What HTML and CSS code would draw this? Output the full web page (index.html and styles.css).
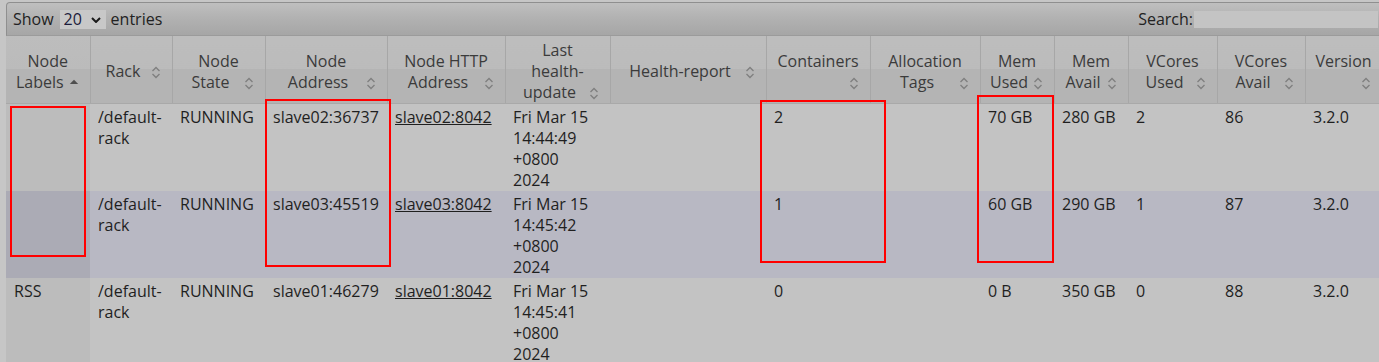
FILE: index.html
```html
<!DOCTYPE html>
<html lang="en">
<head>
<meta charset="utf-8">
<title>Nodes of the cluster</title>
<link rel="stylesheet" href="styles.css">
</head>
<body>
<div class="page">
  <div class="wrapper">
    <div class="toolbar">
      <label class="length">Show <span class="select-wrap"><select class="len-select"><option>20</option></select><svg class="chev" viewBox="0 0 10 6" width="10" height="6"><path d="M1 1 5 5 9 1"/></svg></span> entries</label>
      <label class="search">Search:<input class="search-input" type="text"></label>
    </div>
    <table class="grid">
      <colgroup>
        <col class="w84"><col class="w82"><col class="w93"><col class="w122"><col class="w118"><col class="w105"><col class="w156"><col class="w104"><col class="w110"><col class="w74"><col class="w74"><col class="w89"><col class="w88"><col class="w77">
      </colgroup>
      <thead>
        <tr>
          <th>Node<br>Labels<span class="si"><svg viewBox="0 0 16 21" width="16" height="21"><path class="asc" d="M3.8 12 8 7.8 12.2 12Z"/></svg></span></th>
          <th>Rack<span class="si"><svg viewBox="0 0 16 21" width="16" height="21"><path class="both" d="M4.5 10 8 6.5 11.5 10M4.5 13 8 16.5 11.5 13"/></svg></span></th>
          <th>Node<br>State<span class="si"><svg viewBox="0 0 16 21" width="16" height="21"><path class="both" d="M4.5 10 8 6.5 11.5 10M4.5 13 8 16.5 11.5 13"/></svg></span></th>
          <th>Node<br>Address<span class="si"><svg viewBox="0 0 16 21" width="16" height="21"><path class="both" d="M4.5 10 8 6.5 11.5 10M4.5 13 8 16.5 11.5 13"/></svg></span></th>
          <th>Node HTTP<br>Address<span class="si"><svg viewBox="0 0 16 21" width="16" height="21"><path class="both" d="M4.5 10 8 6.5 11.5 10M4.5 13 8 16.5 11.5 13"/></svg></span></th>
          <th>Last<br>health-<br>update<span class="si"><svg viewBox="0 0 16 21" width="16" height="21"><path class="both" d="M4.5 10 8 6.5 11.5 10M4.5 13 8 16.5 11.5 13"/></svg></span></th>
          <th>Health-report<span class="si"><svg viewBox="0 0 16 21" width="16" height="21"><path class="both" d="M4.5 10 8 6.5 11.5 10M4.5 13 8 16.5 11.5 13"/></svg></span></th>
          <th>Containers<span class="si"><svg viewBox="0 0 16 21" width="16" height="21"><path class="both" d="M4.5 10 8 6.5 11.5 10M4.5 13 8 16.5 11.5 13"/></svg></span></th>
          <th>Allocation<br>Tags<span class="si"><svg viewBox="0 0 16 21" width="16" height="21"><path class="both" d="M4.5 10 8 6.5 11.5 10M4.5 13 8 16.5 11.5 13"/></svg></span></th>
          <th>Mem<br>Used<span class="si"><svg viewBox="0 0 16 21" width="16" height="21"><path class="both" d="M4.5 10 8 6.5 11.5 10M4.5 13 8 16.5 11.5 13"/></svg></span></th>
          <th>Mem<br>Avail<span class="si"><svg viewBox="0 0 16 21" width="16" height="21"><path class="both" d="M4.5 10 8 6.5 11.5 10M4.5 13 8 16.5 11.5 13"/></svg></span></th>
          <th>VCores<br>Used<span class="si"><svg viewBox="0 0 16 21" width="16" height="21"><path class="both" d="M4.5 10 8 6.5 11.5 10M4.5 13 8 16.5 11.5 13"/></svg></span></th>
          <th>VCores<br>Avail<span class="si"><svg viewBox="0 0 16 21" width="16" height="21"><path class="both" d="M4.5 10 8 6.5 11.5 10M4.5 13 8 16.5 11.5 13"/></svg></span></th>
          <th>Version<span class="si"><svg viewBox="0 0 16 21" width="16" height="21"><path class="both" d="M4.5 10 8 6.5 11.5 10M4.5 13 8 16.5 11.5 13"/></svg></span></th>
        </tr>
      </thead>
      <tbody>
        <tr class="odd">
          <td class="sorted"></td>
          <td>/default-rack</td>
          <td>RUNNING</td>
          <td>slave02:36737</td>
          <td><a href="#">slave02:8042</a></td>
          <td class="date">Fri Mar 15 14:44:49 +0800 2024</td>
          <td></td>
          <td>2</td>
          <td></td>
          <td>70 GB</td>
          <td>280 GB</td>
          <td>2</td>
          <td>86</td>
          <td>3.2.0</td>
        </tr>
        <tr class="even">
          <td class="sorted"></td>
          <td>/default-rack</td>
          <td>RUNNING</td>
          <td>slave03:45519</td>
          <td><a href="#">slave03:8042</a></td>
          <td class="date">Fri Mar 15 14:45:42 +0800 2024</td>
          <td></td>
          <td>1</td>
          <td></td>
          <td>60 GB</td>
          <td>290 GB</td>
          <td>1</td>
          <td>87</td>
          <td>3.2.0</td>
        </tr>
        <tr class="odd">
          <td class="sorted">RSS</td>
          <td>/default-rack</td>
          <td>RUNNING</td>
          <td>slave01:46279</td>
          <td><a href="#">slave01:8042</a></td>
          <td class="date">Fri Mar 15 14:45:41 +0800 2024</td>
          <td></td>
          <td>0</td>
          <td></td>
          <td>0 B</td>
          <td>350 GB</td>
          <td>0</td>
          <td>88</td>
          <td>3.2.0</td>
        </tr>
      </tbody>
    </table>
  </div>
  <div class="mark m1"></div>
  <div class="mark m2"></div>
  <div class="mark m3"></div>
  <div class="mark m4"></div>
</div>
</body>
</html>
```

FILE: styles.css
```css
html {
  overflow: hidden;
}

body {
  margin: 0;
  background: #c6c6c6;
  font-family: "Open Sans", "Noto Sans", "Liberation Sans", sans-serif;
  font-size: 16px;
  color: #1f1f1f;
}

.page {
  position: relative;
  padding: 2px 0 0 6px;
}

.wrapper {
  width: 1376px;
}

.toolbar {
  display: flex;
  align-items: center;
  justify-content: space-between;
  height: 32px;
  padding: 0 3px 0 6px;
  border: 1px solid #8f8f8f;
  border-bottom-color: #9b9b9b;
  border-top-left-radius: 4px;
  background: linear-gradient(#bfbfbf, #b2b2b2 45%, #a6a6a6);
  color: #222;
  line-height: 21px;
}

.length {
  display: flex;
  align-items: center;
}

.select-wrap {
  position: relative;
  display: inline-block;
  margin: 0 5px 0 6px;
}

.len-select {
  appearance: none;
  -webkit-appearance: none;
  width: 46px;
  height: 19px;
  margin: 0;
  padding: 0 0 0 4px;
  border: none;
  border-radius: 0;
  background: #c8c8c8;
  font: inherit;
  line-height: 19px;
  color: #1c1c3c;
  display: block;
}

.chev {
  position: absolute;
  right: 5px;
  top: 7px;
  pointer-events: none;
}

.chev path {
  fill: none;
  stroke: #1a1a1a;
  stroke-width: 2;
}

.search {
  display: flex;
  align-items: center;
}

.search-input {
  width: 184px;
  height: 17px;
  margin: 1px 0 0 1px;
  padding: 0;
  border: none;
  background: #c4c4c4;
  font: inherit;
}

.grid {
  width: 1376px;
  table-layout: fixed;
  border-collapse: collapse;
  border-spacing: 0;
}

.w84 { width: 84px; }
.w82 { width: 82px; }
.w93 { width: 93px; }
.w122 { width: 122px; }
.w118 { width: 118px; }
.w105 { width: 105px; }
.w156 { width: 156px; }
.w104 { width: 104px; }
.w110 { width: 110px; }
.w74 { width: 74px; }
.w89 { width: 89px; }
.w88 { width: 88px; }
.w77 { width: 77px; }

.grid th {
  padding: 4px 8px 0;
  border-right: 1px solid #a7a7a7;
  border-bottom: 1px solid #a9a9a9;
  background: linear-gradient(#bdbdbd 0%, #bbbbbb 50%, #b4b4b4 50%, #b4b4b4 100%);
  color: #3b3b3b;
  font-weight: normal;
  text-align: center;
  vertical-align: middle;
  line-height: 21px;
}

.si {
  float: right;
  width: 16px;
  height: 21px;
}

.si svg {
  display: block;
}

.si .both {
  fill: none;
  stroke: #7f7f7f;
  stroke-width: 1.3;
}

.si .asc {
  fill: #4f4f4f;
}

.grid td {
  padding: 3px 8px 0;
  vertical-align: top;
  line-height: 21px;
  height: 84px;
  overflow: hidden;
}

.grid td.date {
  padding-right: 16px;
}

.odd td {
  background: #c3c3c3;
}

.even td {
  background: #b8b8c3;
}

.odd td.sorted {
  background: #bcbcbc;
}

.even td.sorted {
  background: #ababb5;
}

.grid a {
  color: #1f1f1f;
  text-decoration: underline;
}

.mark {
  position: absolute;
  border: 2px solid #ff0000;
  box-sizing: border-box;
}

.m1 { left: 10px; top: 106px; width: 76px; height: 151px; }
.m2 { left: 265px; top: 99px; width: 126px; height: 168px; }
.m3 { left: 760px; top: 100px; width: 126px; height: 163px; }
.m4 { left: 977px; top: 95px; width: 77px; height: 168px; }
```
